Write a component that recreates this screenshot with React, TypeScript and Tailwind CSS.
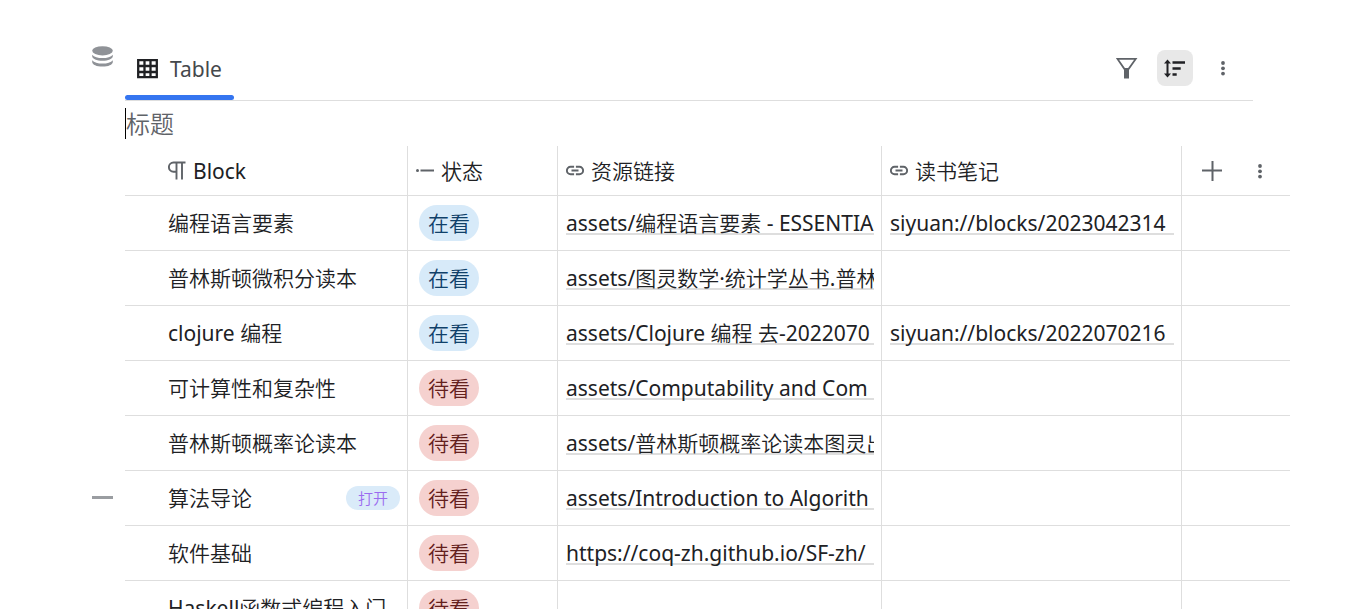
import type { ReactNode } from "react";

type Status = "在看" | "待看";

interface Row {
  name: string;
  status: Status;
  resource?: string;
  note?: string;
  active?: boolean;
}

const rows: Row[] = [
  {
    name: "编程语言要素",
    status: "在看",
    resource: "assets/编程语言要素 - ESSENTIA",
    note: "siyuan://blocks/2023042314",
  },
  { name: "普林斯顿微积分读本", status: "在看", resource: "assets/图灵数学·统计学丛书.普林" },
  {
    name: "clojure 编程",
    status: "在看",
    resource: "assets/Clojure 编程 去-2022070",
    note: "siyuan://blocks/2022070216",
  },
  { name: "可计算性和复杂性", status: "待看", resource: "assets/Computability and Com" },
  { name: "普林斯顿概率论读本", status: "待看", resource: "assets/普林斯顿概率论读本图灵出" },
  { name: "算法导论", status: "待看", resource: "assets/Introduction to Algorith", active: true },
  { name: "软件基础", status: "待看", resource: "https://coq-zh.github.io/SF-zh/" },
  { name: "Haskell函数式编程入门", status: "待看" },
];

const statusStyle: Record<Status, string> = {
  在看: "bg-[#d7eaf9] text-[#0f4069]",
  待看: "bg-[#f5d1cf] text-[#64201c]",
};

function DatabaseIcon() {
  return (
    <svg width="22" height="22" viewBox="0 0 22 22" fill="#8f9297" aria-hidden="true">
      <ellipse cx="10.500" cy="4.800" rx="10.300" ry="4.600" />
      <path d="M.2 8.700c1.800 2.200 5.600 3.400 10.300 3.400s8.500-1.200 10.300-3.400v1.500c0 2.600-4.600 4.500-10.300 4.500S.2 12.800.2 10.200z" />
      <path d="M.2 14.200c1.800 2.200 5.600 3.400 10.300 3.400s8.500-1.200 10.300-3.400v1.700c0 2.600-4.600 4.700-10.300 4.700S.2 18.500.2 15.900z" />
    </svg>
  );
}

function TableIcon() {
  return (
    <svg width="22" height="20" viewBox="0 0 22 20" fill="none" stroke="#202124" strokeWidth="2.300" aria-hidden="true">
      <path d="M1.200 1.200h18.600v17H1.200zM1 7h19M1 13h19M7.500 1v17M13.500 1v17" />
    </svg>
  );
}

function FilterIcon() {
  return (
    <svg width="22" height="22" viewBox="0 0 22 22" aria-hidden="true">
      <path d="M1.500 1.900h18.200L12.500 12h-4z" fill="none" stroke="#5f6368" strokeWidth="1.800" />
      <path d="M8 11.500h5V21.500H8z" fill="#5f6368" />
    </svg>
  );
}

function SortIcon() {
  return (
    <svg width="22" height="20" viewBox="0 0 22 20" aria-hidden="true">
      <path d="M3.500 4v13" stroke="#202124" strokeWidth="2" />
      <path d="M3.500 1.500L7 5.500H0zM3.500 19.500L7 15.500H0z" fill="#202124" />
      <path d="M8.500 4.500H21M8.500 10.500h8.200M8.500 16.500h4.200" stroke="#202124" strokeWidth="2.400" />
    </svg>
  );
}

function DotsIcon() {
  return (
    <svg width="16" height="16" viewBox="0 0 16 16" fill="#5f6368" aria-hidden="true">
      <circle cx="8" cy="3" r="1.900" />
      <circle cx="8" cy="8.300" r="1.900" />
      <circle cx="8" cy="13.600" r="1.900" />
    </svg>
  );
}

function PlusIcon() {
  return (
    <svg width="20" height="20" viewBox="0 0 20 20" stroke="#5f6368" strokeWidth="2" aria-hidden="true">
      <path d="M10.500 0v20M0 9.500h20" />
    </svg>
  );
}

function ParagraphIcon() {
  return (
    <svg width="18" height="20" viewBox="0 0 18 20" aria-hidden="true">
      <path d="M17.500 1.500h-12a4.600 4.600 0 0 0 0 9.200H8M8.500 1.500v17M14 1.500v17" fill="none" stroke="#5f6368" strokeWidth="1.900" />
    </svg>
  );
}

function SelectIcon() {
  return (
    <svg width="18" height="18" viewBox="0 0 18 18" aria-hidden="true">
      <circle cx="1.500" cy="8.500" r="1.500" fill="#5f6368" />
      <path d="M4.500 8.500H18" stroke="#5f6368" strokeWidth="2" />
    </svg>
  );
}

function LinkIcon() {
  return (
    <svg width="18" height="18" viewBox="0 0 18 18" fill="none" stroke="#5f6368" strokeWidth="1.900" aria-hidden="true">
      <path d="M8.100 4.800H4.600a3.700 3.700 0 0 0 0 7.400h3.500M9.900 4.800h3.500a3.700 3.700 0 0 1 0 7.400H9.900M5.500 8.500h7" />
    </svg>
  );
}

function ColumnHead({ icon, label, first }: { icon: ReactNode; label: string; first?: boolean }) {
  return (
    <th
      scope="col"
      className={`h-[50px] border-r border-b border-[#dedede] pr-2 text-left font-normal ${first ? "pl-[43px]" : "pl-2"}`}
    >
      <span className="flex items-center gap-[7px]">
        {icon}
        {label}
      </span>
    </th>
  );
}

function LinkCell({ text }: { text?: string }) {
  return (
    <td className="border-r border-b border-[#dedede] pr-[7px] pl-2">
      {text && (
        <a
          href="#"
          className="block overflow-x-clip border-b-2 border-[#dedede] pt-0.5 leading-5 whitespace-nowrap"
        >
          {text}
        </a>
      )}
    </td>
  );
}

export default function App() {
  return (
    <div className="flex h-screen overflow-hidden bg-white pl-[92px] font-['Noto_Sans','Noto_Sans_CJK_SC_DemiLight','Noto_Sans_CJK_SC_Light','Noto_Sans_CJK_SC',sans-serif] text-[21px] leading-[30px] text-[#202124]">
      <div className="flex w-[33px] shrink-0 flex-col items-start pt-[46px]">
        <button type="button" aria-label="数据库" className="h-[22px]">
          <DatabaseIcon />
        </button>
        <button type="button" aria-label="行菜单" className="mt-[417px] flex h-6 w-[21px] items-center">
          <span className="h-[3px] w-full bg-[#9a9da1]" />
        </button>
      </div>

      <main className="min-w-0 flex-1 pt-[38px]">
        <header className="mr-[98px] flex h-[63px] items-start justify-between border-b border-[#dedede]">
          <button
            type="button"
            className="relative flex h-[62px] items-center gap-[11px] px-3 text-[#45484c]"
          >
            <TableIcon />
            <span>Table</span>
            <span className="absolute inset-x-0 bottom-0 h-[5px] rounded-full bg-[#3575f0]" />
          </button>
          <div className="flex items-center gap-3 pt-3 pr-3">
            <button type="button" aria-label="过滤" className="flex size-9 items-center justify-center">
              <FilterIcon />
            </button>
            <button
              type="button"
              aria-label="排序"
              className="flex size-9 items-center justify-center rounded-lg bg-[#e8e8e8]"
            >
              <SortIcon />
            </button>
            <button type="button" aria-label="更多" className="flex size-9 items-center justify-center">
              <DotsIcon />
            </button>
          </div>
        </header>

        <input
          type="text"
          aria-label="标题"
          placeholder="标题"
          className="mt-[7px] block h-[31px] w-[400px] border-l border-black text-2xl text-[#202124] outline-none placeholder:text-[#5f6368]"
        />

        <table className="mt-[7px] w-[1165px] table-fixed border-separate border-spacing-0">
          <colgroup>
            <col className="w-[283px]" />
            <col className="w-[150px]" />
            <col className="w-[324px]" />
            <col className="w-[300px]" />
            <col className="w-[108px]" />
          </colgroup>
          <thead>
            <tr>
              <ColumnHead icon={<ParagraphIcon />} label="Block" first />
              <ColumnHead icon={<SelectIcon />} label="状态" />
              <ColumnHead icon={<LinkIcon />} label="资源链接" />
              <ColumnHead icon={<LinkIcon />} label="读书笔记" />
              <th scope="col" className="border-b border-[#dedede] pl-3">
                <span className="flex gap-3">
                  <button type="button" aria-label="添加列" className="flex size-9 items-center justify-center">
                    <PlusIcon />
                  </button>
                  <button type="button" aria-label="列选项" className="flex size-9 items-center justify-center">
                    <DotsIcon />
                  </button>
                </span>
              </th>
            </tr>
          </thead>
          <tbody>
            {rows.map((row) => (
              <tr key={row.name} className="h-[55px]">
                <td className="border-r border-b border-[#dedede] pr-[7px] pl-[43px]">
                  <div className="flex items-center justify-between whitespace-nowrap">
                    {row.name}
                    {row.active && (
                      <button
                        type="button"
                        className="h-6 rounded-full bg-[#daebf9] px-3 text-[15px] leading-6 text-[#9b6cf0]"
                      >
                        打开
                      </button>
                    )}
                  </div>
                </td>
                <td className="border-r border-b border-[#dedede] pl-[11px]">
                  <span className={`flex h-9 w-fit items-center rounded-full px-[9px] ${statusStyle[row.status]}`}>
                    {row.status}
                  </span>
                </td>
                <LinkCell text={row.resource} />
                <LinkCell text={row.note} />
                <td className="border-b border-[#dedede]" />
              </tr>
            ))}
          </tbody>
        </table>
      </main>
    </div>
  );
}
